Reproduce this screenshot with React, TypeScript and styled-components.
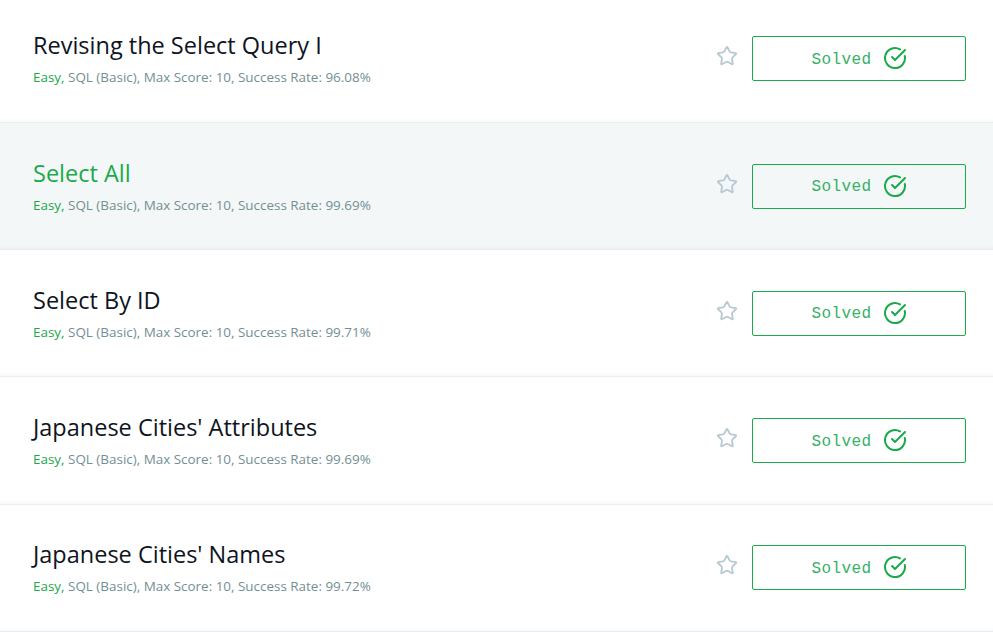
import React from 'react'
import styled, { createGlobalStyle } from 'styled-components'
import { CircleCheckBig, Star } from 'lucide-react'

const GlobalStyle = createGlobalStyle`
  html, body {
    margin: 0;
    padding: 0;
    height: 632px;
    overflow: hidden;
    background: #ffffff;
    font-family: "Open Sans", "Liberation Sans", sans-serif;
  }
`

const List = styled.div`
  margin-top: -4.3px;
  display: flex;
  flex-direction: column;
`
const Row = styled.div<{ $active: boolean }>`
  box-sizing: border-box;
  height: 127.25px;
  padding: 0 27px 0 33px;
  display: flex;
  align-items: center;
  justify-content: space-between;
  background: ${({ $active }) => ($active ? '#f3f7f7' : '#ffffff')};
  border-bottom: 1px solid #e9edef;
  box-shadow: inset 0 -4px 4px -3px rgba(0, 0, 0, 0.04);
`
const Info = styled.div`
  display: flex;
  flex-direction: column;
  gap: 6px;
  padding-bottom: 1px;
`
const Title = styled.h4<{ $active: boolean }>`
  margin: 0;
  font-size: 23.5px;
  line-height: 33px;
  font-weight: 400;
  color: ${({ $active }) => ($active ? '#1ba94c' : '#0e141e')};
`
const Meta = styled.div`
  font-size: 13.45px;
  line-height: 19px;
  color: #738f93;
`
const Difficulty = styled.span`
  color: #1ba94c;
`
const Actions = styled.div`
  display: flex;
  align-items: center;
  gap: 14px;
`
const StarButton = styled.span`
  display: flex;
  width: 22px;
  height: 22px;
  margin-top: -5px;
  color: #b7c9d4;
`
const SolvedButton = styled.div`
  box-sizing: border-box;
  width: 214px;
  height: 45px;
  display: flex;
  align-items: center;
  justify-content: center;
  gap: 11px;
  border: 1px solid #1ba94c;
  border-radius: 2px;
  color: #1ba94c;
`
const SolvedLabel = styled.span`
  padding-top: 2px;
  color: #35b263;
  font-family: "Liberation Mono", "DejaVu Sans Mono", monospace;
  font-size: 16px;
  letter-spacing: 0.4px;
`
const SolvedIcon = styled(CircleCheckBig)`
  margin-top: -1px;
`

const challenges = [
  { title: 'Revising the Select Query I', rate: '96.08%' },
  { title: 'Select All', rate: '99.69%', active: true },
  { title: 'Select By ID', rate: '99.71%' },
  { title: "Japanese Cities' Attributes", rate: '99.69%' },
  { title: "Japanese Cities' Names", rate: '99.72%' },
]

export default function App() {
  return (
    <>
      <GlobalStyle />
      <List>
        {challenges.map(item => (
          <Row $active={!!item.active} key={item.title}>
            <Info>
              <Title $active={!!item.active}>{item.title}</Title>
              <Meta>
                <Difficulty>Easy,</Difficulty> SQL (Basic), Max Score: 10, Success Rate: {item.rate}
              </Meta>
            </Info>
            <Actions>
              <StarButton>
                <Star size={22} strokeWidth={2} />
              </StarButton>
              <SolvedButton>
                <SolvedLabel>Solved</SolvedLabel>
                <SolvedIcon size={24} strokeWidth={2} />
              </SolvedButton>
            </Actions>
          </Row>
        ))}
      </List>
    </>
  )
}
